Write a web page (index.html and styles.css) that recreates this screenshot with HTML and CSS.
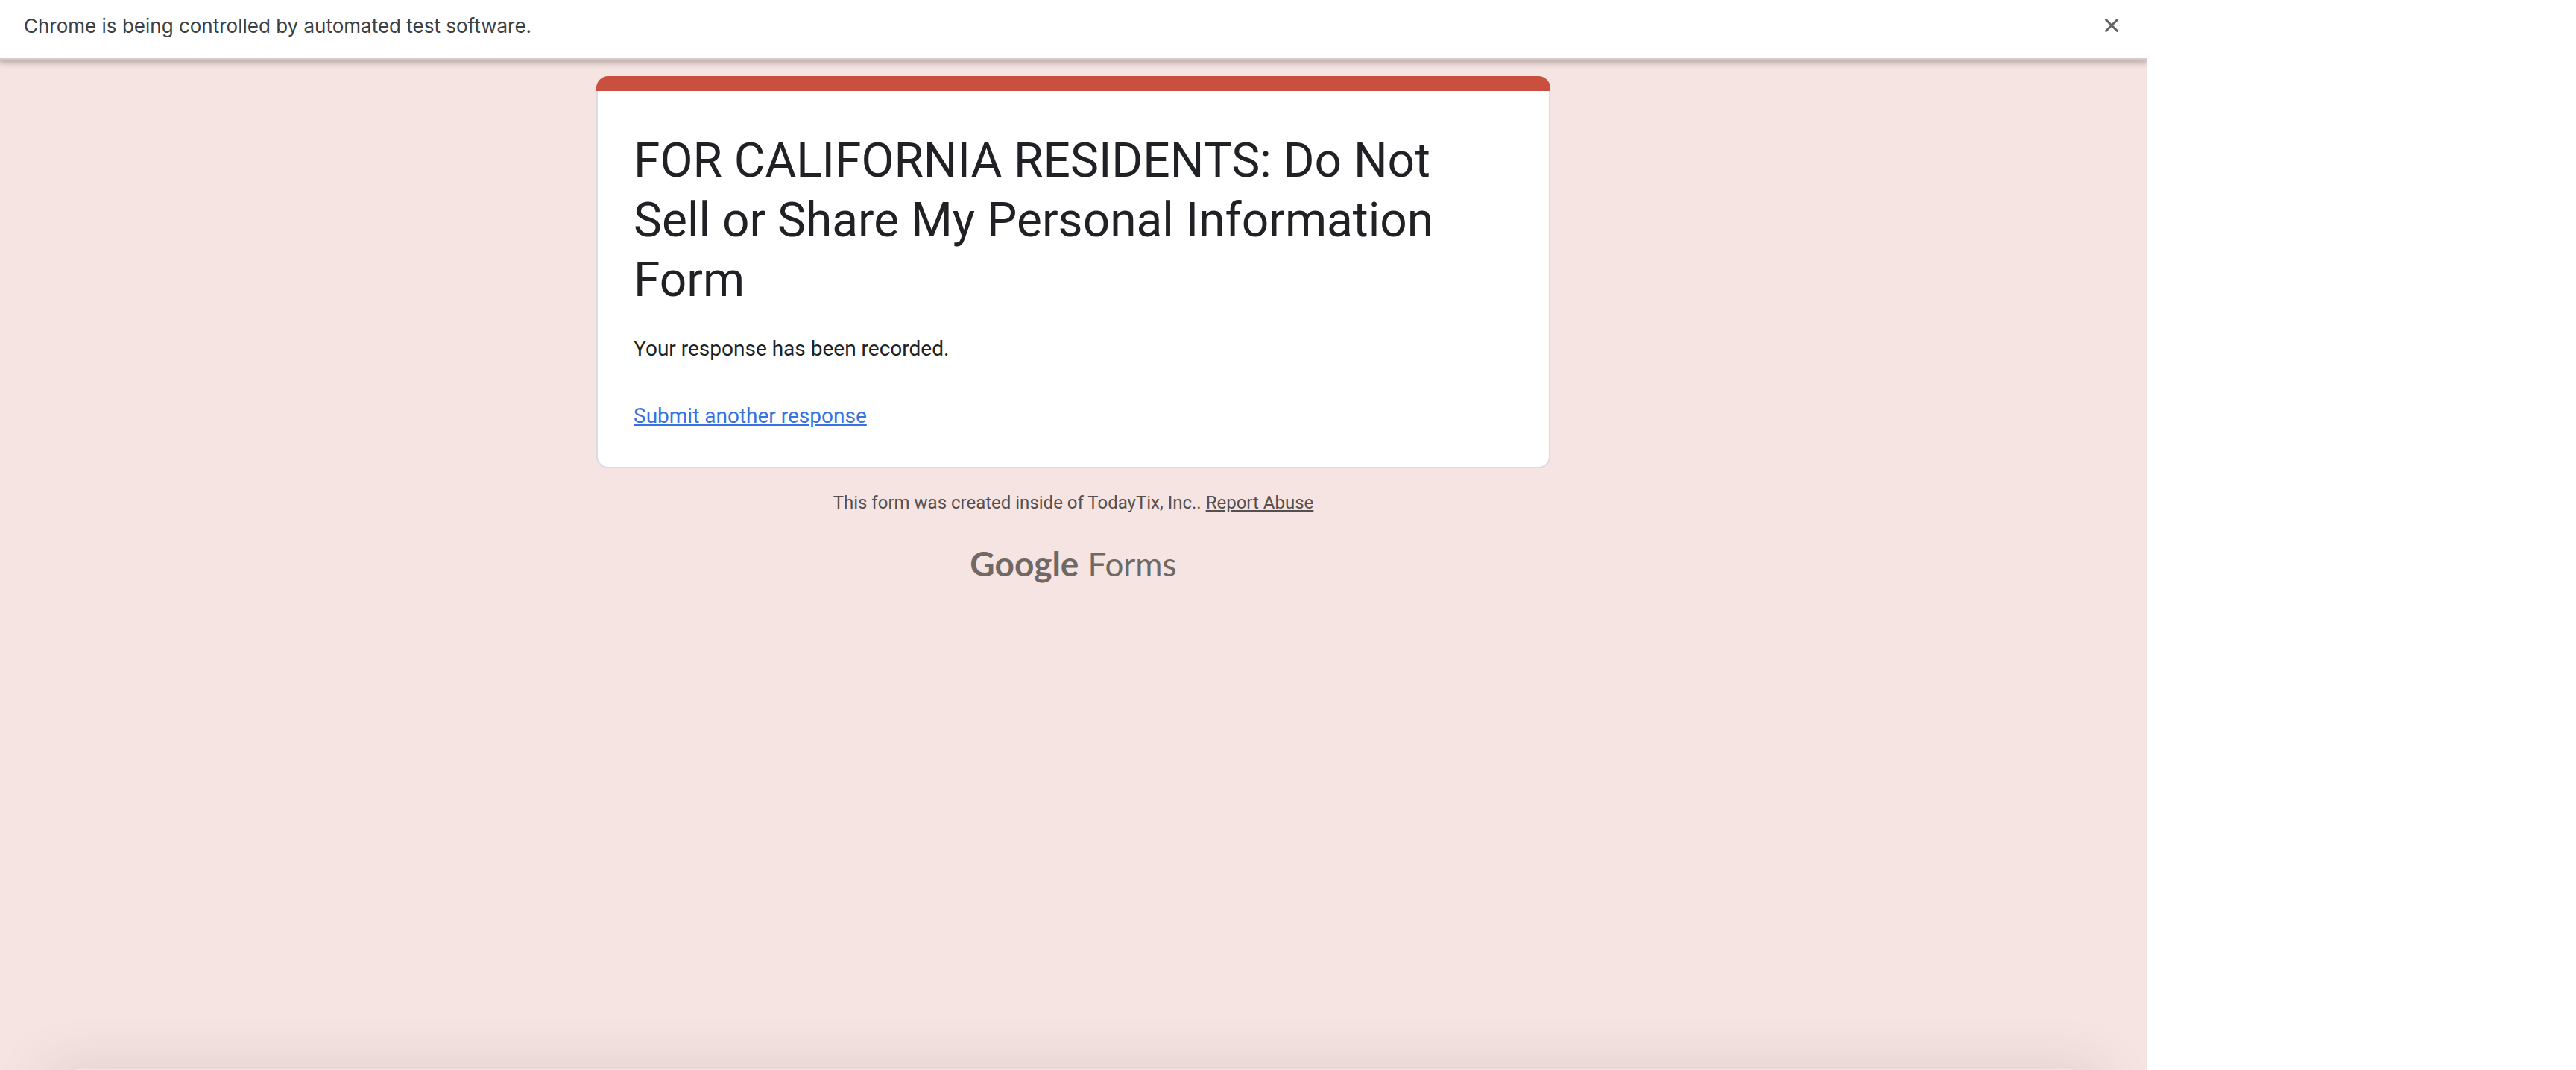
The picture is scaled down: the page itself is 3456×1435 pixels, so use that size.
FILE: index.html
```html
<!DOCTYPE html>
<html lang="en">
<head>
<meta charset="utf-8">
<title>Do Not Sell or Share My Personal Information Form</title>
<link rel="stylesheet" href="styles.css">
</head>
<body>
<div class="window">
  <header class="infobar">
    <span>Chrome is being controlled by automated test software.</span>
    <button class="close" type="button" aria-label="Close">
      <svg viewBox="0 0 18 18" width="18" height="18"><path d="M1.500 1.500 16.500 16.500M16.500 1.500 1.500 16.500"/></svg>
    </button>
  </header>
  <main class="page">
    <section class="card">
      <div class="strip"></div>
      <div class="content">
        <h1>FOR CALIFORNIA RESIDENTS: Do Not Sell or Share My Personal Information Form</h1>
        <p class="message">Your response has been recorded.</p>
        <a class="again" href="#">Submit another response</a>
      </div>
    </section>
    <p class="notice">This form was created inside of TodayTix, Inc.. <a href="#">Report Abuse</a></p>
    <a class="logo" href="#"><span class="brand">Google</span><span class="product">Forms</span></a>
  </main>
  <div class="edge"></div>
</div>
</body>
</html>
```
FILE: styles.css
```css
* {
  box-sizing: border-box;
}

body {
  margin: 0;
  display: grid;
  grid-template-columns: 5fr 1fr;
  background: #fff;
  font-family: Roboto, sans-serif;
  color: #202124;
}

.window {
  display: flex;
  flex-direction: column;
  min-height: 100vh;
  overflow: hidden;
  background: #f5e4e1;
}

.infobar {
  display: flex;
  justify-content: space-between;
  align-items: center;
  height: 80px;
  padding: 0 32px 10px;
  background: #fff;
  border-bottom: 2px solid #d5cbc9;
  box-shadow: 0 2px 8px 2px rgba(60, 50, 50, 0.35);
  font-family: Inter, sans-serif;
  font-size: 26px;
  color: #3c4043;
}

.close {
  display: flex;
  padding: 6px;
  border: 0;
  background: none;
}

.close svg {
  fill: none;
  stroke: #5f6368;
  stroke-width: 3;
  stroke-linecap: round;
}

.page {
  display: flex;
  flex-direction: column;
  align-items: center;
  padding: 22px 24px;
}

.card {
  width: 100%;
  max-width: 1280px;
}

.strip {
  height: 20px;
  background: #c9503f;
  border-radius: 16px 16px 0 0;
}

.content {
  padding: 54px 48px 48px;
  background: #fff;
  border: 2px solid #dadce0;
  border-top: 0;
  border-radius: 0 0 16px 16px;
}

h1 {
  margin: 0;
  font-size: 64px;
  font-weight: 400;
  line-height: 80px;
}

.message {
  margin: 32px 0 50px;
  font-size: 28px;
  line-height: 40px;
}

.again {
  display: block;
  width: fit-content;
  font-size: 28px;
  line-height: 40px;
  color: #3871e0;
}

.notice {
  margin: 28px 0 34px;
  font-size: 24px;
  line-height: 36px;
  color: #55504f;
}

.notice a {
  color: inherit;
}

.logo {
  display: flex;
  align-items: baseline;
  gap: 12px;
  font-family: Lato, sans-serif;
  line-height: 60px;
  color: #706865;
  text-decoration: none;
}

.brand {
  font-size: 46px;
  font-weight: 700;
}

.product {
  font-size: 44px;
}

.edge {
  height: 1px;
  margin: auto 100px 0;
  box-shadow: 0 40px 80px 36px rgba(60, 40, 40, 0.14);
}
```
